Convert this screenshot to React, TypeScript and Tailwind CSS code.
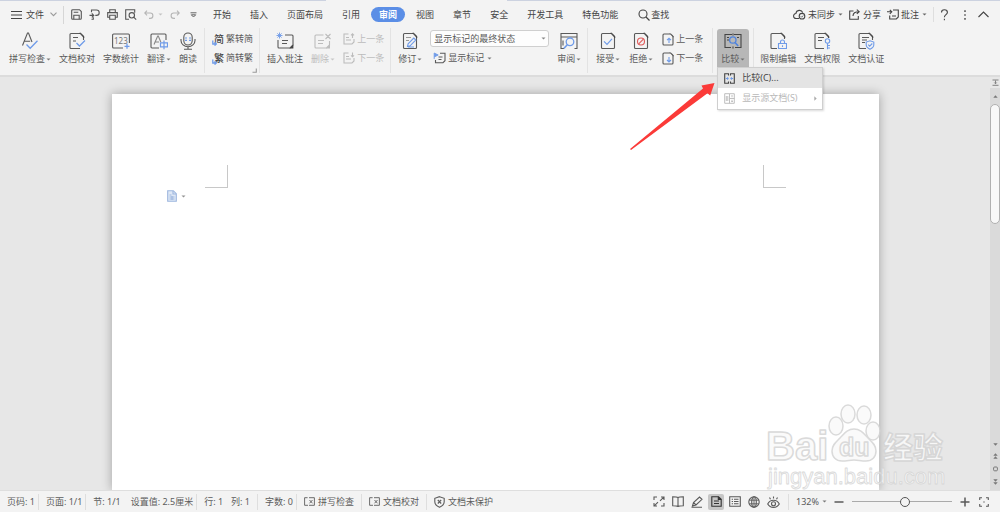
import React from "react";

const BLUE = "#6f9be8";

/** 图标外壳：1个单位对应1像素 */
function Icon({ w = 18, h = 18, children }: { w?: number; h?: number; children: React.ReactNode }) {
  return (
    <svg
      width={w}
      height={h}
      viewBox={`0 0 ${w} ${h}`}
      fill="none"
      stroke="currentColor"
      strokeWidth="1.1"
      className="shrink-0"
      aria-hidden="true"
    >
      {children}
    </svg>
  );
}

/** 下拉小三角 */
function Caret() {
  return (
    <svg width="5" height="3" viewBox="0 0 5 3" className="ml-px shrink-0" aria-hidden="true">
      <path d="M0.5 0.4h4L2.5 2.6z" fill="currentColor" opacity="0.8" />
    </svg>
  );
}

/** 右上角深色折角 */
function Fold() {
  return <path d="M11.5 1h1.2l3.3 3.3V6z" fill="#444" stroke="#444" strokeWidth="0.5" />;
}

/** 右上角折角的文档轮廓 */
function DocShape() {
  return (
    <>
      <path d="M12 1.5H3.5a1 1 0 0 0-1 1v13a1 1 0 0 0 1 1h11a1 1 0 0 0 1-1V5" />
      <Fold />
    </>
  );
}

/** 小号文档轮廓（上一条/下一条） */
function SmallDoc({ up }: { up?: boolean }) {
  return (
    <Icon w={12} h={13}>
      <path d="M8 1H2a1 1 0 0 0-1 1v9a1 1 0 0 0 1 1h8a1 1 0 0 0 1-1V3.5" />
      <path d="M7.8 0.7h1L11.3 3v1.2z" fill="#444" stroke="#444" strokeWidth="0.4" />
      <path d={up ? "M7 10V5.5M5 7.2l2-2 2 2" : "M7 5v5M5 8l2 2 2-2"} stroke={BLUE} />
    </Icon>
  );
}

/** 小号批注轮廓（禁用状态） */
function SmallComment({ up }: { up?: boolean }) {
  return (
    <Icon w={12} h={12}>
      <path d="M5.5 1H1v10h8l2-2V6M3 4.5h3M3 7h5" />
      <path d={up ? "M9.5 5V1M8 2.3L9.5 0.8 11 2.3" : "M9.5 0.5v4M8 3.3l1.5 1.5L11 3.3"} />
    </Icon>
  );
}

interface ToolProps {
  label: string;
  icon: React.ReactNode;
  caret?: boolean;
  disabled?: boolean;
}

/** 功能区大按钮 */
function BigTool({ label, icon, caret, disabled }: ToolProps) {
  return (
    <button
      type="button"
      disabled={disabled}
      className="flex h-9 flex-col items-center gap-px pt-px text-[#5a5a5a] disabled:text-[#bcbcbc]"
    >
      <span className="flex h-[22px] items-center">{icon}</span>
      <span className="flex items-center leading-3 whitespace-nowrap">
        {label}
        {caret && <Caret />}
      </span>
    </button>
  );
}

/** 功能区小按钮 */
function SmallTool({ label, icon, caret, disabled }: ToolProps) {
  return (
    <button
      type="button"
      disabled={disabled}
      className="flex h-[14px] items-center gap-[2px] leading-3 whitespace-nowrap text-[#5a5a5a] disabled:text-[#bcbcbc]"
    >
      {icon}
      {label}
      {caret && <Caret />}
    </button>
  );
}

function Stack({ children }: { children: React.ReactNode }) {
  return <div className="flex flex-col gap-[5px] pt-[3px]">{children}</div>;
}

function Group({ children, className = "gap-2 pr-1.5 pl-[7px]" }: { children: React.ReactNode; className?: string }) {
  return <div className={`relative flex h-[45px] border-r border-[#e3e3e3] pt-px ${className}`}>{children}</div>;
}

function ConvertIcon({ char }: { char: string }) {
  return (
    <Icon w={12} h={13}>
      <text x="2" y="10" fontSize="10" fontWeight="500" fill="#444" stroke="none">
        {char}
      </text>
      <path d="M0.8 7.5V11h3M2.6 9.3L4.3 11 2.6 12.6" stroke={BLUE} strokeWidth="1.3" />
    </Icon>
  );
}

const TABS = ["开始", "插入", "页面布局", "引用", "审阅", "视图", "章节", "安全", "开发工具", "特色功能"];

function TabBar() {
  return (
    <header className="flex h-[27px] items-center text-[#444]">
      <button type="button" className="ml-[11px] flex items-center gap-1">
        <Icon w={11} h={10}>
          <path d="M0 1.5h11M0 5h11M0 8.5h11" />
        </Icon>
        文件
        <span className="ml-[2px] text-[#999]">
          <Icon w={7} h={5}>
            <path d="M0.5 0.7l3 3 3-3" />
          </Icon>
        </span>
      </button>
      <div className="ml-[6px] h-[18px] w-px bg-[#d6d6d6]" />
      <div className="ml-[7px] flex items-center gap-[7px] text-[#555]">
        <button type="button" aria-label="保存">
          <Icon w={11} h={11}>
            <path d="M1.8 0.7h6.7l1.8 1.8v6.8a1 1 0 0 1-1 1H1.7a1 1 0 0 1-1-1V1.7a1 1 0 0 1 1-1zM2.7 3.3h4.6M2.8 10V6.2h5.4V10" />
          </Icon>
        </button>
        <button type="button" aria-label="输出">
          <Icon w={11} h={11}>
            <path d="M2.5 3.3V1h5a2.6 2.6 0 0 1 0 5.4H6.3M0.5 6.4H4M2.8 4.4l2 2-2 2M4.3 8.3v2H2.5" />
          </Icon>
        </button>
        <button type="button" aria-label="打印">
          <Icon w={11} h={11}>
            <path d="M2.7 3.5V0.7h5.6v2.8M2.5 8.3H0.7V3.6h9.6v4.7H8.5M2.7 6.3h5.6v4H2.7z" />
          </Icon>
        </button>
        <button type="button" aria-label="打印预览">
          <Icon w={12} h={11}>
            <path d="M4 10.3H0.7V0.7h9v3" />
            <circle cx="6.8" cy="6.3" r="2.7" />
            <path d="M8.7 8.2l2.5 2.4" />
          </Icon>
        </button>
        <button type="button" aria-label="撤销" className="flex items-center gap-[3px] text-[#b5b5b5]">
          <Icon w={10} h={9}>
            <path d="M3 0.7L0.8 3 3 5.3M1 3h5.2a2.7 2.7 0 0 1 0 5.4H5" />
          </Icon>
          <Caret />
        </button>
        <button type="button" aria-label="恢复" className="text-[#b5b5b5]">
          <Icon w={10} h={9}>
            <path d="M7 0.7L9.2 3 7 5.3M9 3H3.8a2.7 2.7 0 0 0 0 5.4H5" />
          </Icon>
        </button>
        <button type="button" aria-label="自定义" className="ml-[3px]">
          <Icon w={7} h={6}>
            <path d="M0.5 0.8h6M1.3 2.8h4.4L3.5 5z" strokeWidth="0.9" />
          </Icon>
        </button>
      </div>
      <nav className="ml-[8px] flex items-center gap-[3px]">
        {TABS.map((tab) => (
          <button
            key={tab}
            type="button"
            className={
              tab === "审阅"
                ? "h-[15px] rounded-full bg-[#5b8ee6] px-2 leading-[15px] font-bold whitespace-nowrap text-white"
                : "h-[15px] px-2 leading-[15px] whitespace-nowrap"
            }
          >
            {tab}
          </button>
        ))}
      </nav>
      <button type="button" className="ml-3 flex items-center gap-px">
        <Icon w={12} h={12}>
          <circle cx="5" cy="5" r="4" />
          <path d="M8 8l3.5 3.5" strokeWidth="1.3" />
        </Icon>
        查找
      </button>
      <div className="ml-auto flex items-center gap-[6px] pr-[11px] whitespace-nowrap">
        <button type="button" className="flex items-center gap-[2px]">
          <Icon w={13} h={11}>
            <path d="M6 9.5H3.3a2.5 2.5 0 0 1-.4-5A3.6 3.6 0 0 1 9.8 3.6" />
            <circle cx="9" cy="7.2" r="2.8" />
            <path d="M7.8 7.3l.9.9 1.5-1.7" strokeWidth="0.8" />
          </Icon>
          未同步
          <Caret />
        </button>
        <button type="button" className="flex items-center gap-[3px]">
          <Icon w={11} h={11}>
            <path d="M4.5 2H0.7v8.3h8.6V7M4 7c0-3 2-4.3 6-4.3M7.8 0.6L10.2 2.7 7.8 4.9" />
          </Icon>
          分享
        </button>
        <button type="button" className="flex items-center gap-[2px]">
          <Icon w={12} h={11}>
            <path d="M6 1h5.3v7l-2 2H2.7V6.5M5 7h4M0 2.7h4.5M2.8 0.8l2 2-2 2" />
          </Icon>
          批注
          <Caret />
        </button>
        <div className="h-[15px] w-px bg-[#dedede]" />
        <button type="button" aria-label="帮助">
          <Icon w={9} h={12}>
            <path d="M1.5 3.5C1.5 1.7 2.8 0.8 4.4 0.8s3 1 3 2.6c0 2.2-3 2.3-3 4.8M4.4 9.8v1.4" />
          </Icon>
        </button>
        <button type="button" aria-label="更多" className="pr-1.5 pl-[9px]">
          <Icon w={2} h={10}>
            <path d="M1 0.3v1.6M1 4.2v1.6M1 8.1v1.6" strokeWidth="1.4" />
          </Icon>
        </button>
        <button type="button" aria-label="折叠功能区">
          <Icon w={11} h={7}>
            <path d="M0.5 6l5-5 5 5" />
          </Icon>
        </button>
      </div>
    </header>
  );
}

/** 比较按钮及其下拉菜单 */
function CompareMenu() {
  return (
    <div className="relative self-start">
      <button
        type="button"
        aria-expanded="true"
        className="flex h-[38px] w-8 flex-col items-center gap-px rounded-t-[3px] bg-[#b7b7b7] pt-px text-[#5a5a5a]"
      >
        <span className="flex h-[22px] items-center">
          <Icon>
            <path d="M8 2.5H1v13h6M10 2.5h7v13h-6M9 1.5v2M9 14.5v2M3 5.5h2M3 8h2M13 5.5h2" stroke="#444" />
            <circle cx="8.8" cy="8" r="3.2" stroke="#4f83de" strokeWidth="1.3" />
            <path d="M11 10.5l3.2 3.5" stroke="#4f83de" strokeWidth="1.6" />
          </Icon>
        </span>
        <span className="flex items-center leading-3 whitespace-nowrap">
          比较
          <Caret />
        </span>
      </button>
      <div
        role="menu"
        className="absolute top-full left-0 z-20 w-[106px] border border-[#cfcfcf] bg-white pb-px shadow-[1px_1px_2px_rgba(0,0,0,0.15)]"
      >
        <button
          type="button"
          role="menuitem"
          className="flex h-5 w-full items-center gap-[7px] bg-[#e4e4e4] pl-1.5 text-[#444]"
        >
          <Icon w={11} h={11}>
            <path d="M4.5 2.5V0.7H0.7v9.6h3.8V8.5M6.5 2.5V0.7h3.8v9.6H6.5V8.5" />
            <path d="M1.8 5.5h2.8M6.4 5.5h2.8M3.6 4.2v2.6M7.4 4.2v2.6" stroke={BLUE} />
          </Icon>
          比较(C)...
        </button>
        <button
          type="button"
          role="menuitem"
          disabled
          className="flex h-5 w-full items-center gap-[7px] pl-1.5 text-[#b9b9b9]"
        >
          <Icon w={11} h={11}>
            <path d="M5.5 0.7H0.7v9.6h9.6V0.7H5.5v9.6M2.3 3v5M3.8 3v5M5.5 5.5h5M8 2v2.3M7.3 8.5h1.6M8 6.8v2" strokeWidth="0.9" />
          </Icon>
          显示源文档(S)
          <span className="mr-[5px] ml-auto">
            <svg width="3" height="5" viewBox="0 0 3 5" aria-hidden="true">
              <path d="M0.3 0.3v4.4l2.4-2.2z" fill="#aaa" />
            </svg>
          </span>
        </button>
      </div>
    </div>
  );
}

function Ribbon() {
  return (
    <div className="flex h-[49px] border-b-2 border-[#dcdcdc]">
      <Group className="gap-2 pr-[7px] pl-[9px]">
        <BigTool
          label="拼写检查"
          caret
          icon={
            <Icon>
              <path d="M1.5 13.5L6.5 1h1L11 10M3.4 9.3h5.8" />
              <path d="M5.5 12.5l3.7 3.7 7.3-7.5" stroke={BLUE} strokeWidth="1.3" />
            </Icon>
          }
        />
        <BigTool
          label="文档校对"
          icon={
            <Icon>
              <path d="M12 1.5H3a1 1 0 0 0-1 1v13a1 1 0 0 0 1 1h9M15.5 5v3M5 5.5h5M5 9h3" />
              <Fold />
              <path d="M8.5 11l3 3 5.5-5.5" stroke={BLUE} strokeWidth="1.3" />
            </Icon>
          }
        />
        <BigTool
          label="字数统计"
          icon={
            <Icon>
              <path d="M11 16H1.6a1 1 0 0 1-1-1V3a1 1 0 0 1 1-1h14.8a1 1 0 0 1 1 1v8" />
              <text x="2" y="12" fontSize="8" fill="#777" stroke="none">
                123
              </text>
              <path d="M15 11.8v5M12.5 14.3h5" stroke={BLUE} strokeWidth="1.3" />
            </Icon>
          }
        />
        <BigTool
          label="翻译"
          caret
          icon={
            <Icon>
              <path d="M9 16H2a1 1 0 0 1-1-1V3a1 1 0 0 1 1-1h13a1 1 0 0 1 1 1v5" />
              <path d="M4 12.5L7.7 4h.6l2.5 6M5 10h4" stroke="#888" />
              <path d="M10.5 10.8h7v4h-7zM14 8.5v8.7" stroke={BLUE} strokeWidth="1.2" />
            </Icon>
          }
        />
        <BigTool
          label="朗读"
          icon={
            <Icon>
              <rect x="4.8" y="1" width="8.4" height="12" rx="4.2" />
              <path d="M2 7v1.5a7 6.3 0 0 0 14 0V7M9 15v2M5 17.2h8" />
              <path d="M6 6h2M6 8.3h2M10 6h2M10 8.3h2" stroke={BLUE} strokeWidth="1.2" />
            </Icon>
          }
        />
      </Group>
      <Group>
        <Stack>
          <SmallTool label="繁转简" icon={<ConvertIcon char="简" />} />
          <SmallTool label="简转繁" icon={<ConvertIcon char="繁" />} />
        </Stack>
        <span className="absolute right-[2px] bottom-0 text-[#999]">
          <Icon w={5} h={5}>
            <path d="M4.3 0.5v3.8H0.5" />
          </Icon>
        </span>
      </Group>
      <Group>
        <BigTool
          label="插入批注"
          icon={
            <Icon>
              <path d="M9 3h7a1 1 0 0 1 1 1v9l-3 3H3a1 1 0 0 1-1-1V8M6 8.5h6M6 11.5h5" />
              <path d="M17.4 12.5v4h-4z" fill="#444" stroke="none" />
              <path d="M3.5 0.5v6M0.5 3.5h6M1.4 1.4l4.2 4.2M5.6 1.4L1.4 5.6" stroke={BLUE} strokeWidth="0.9" />
            </Icon>
          }
        />
        <BigTool
          label="删除"
          caret
          disabled
          icon={
            <Icon>
              <path d="M9.5 3H2a1 1 0 0 0-1 1v11a1 1 0 0 0 1 1h10.5l3-3V9M4 8.5h6M4 11.5h5M11.5 2l5 5M16.5 2l-5 5" />
              <path d="M16 12.5v4h-4z" fill="currentColor" stroke="none" />
            </Icon>
          }
        />
        <Stack>
          <SmallTool label="上一条" disabled icon={<SmallComment up />} />
          <SmallTool label="下一条" disabled icon={<SmallComment />} />
        </Stack>
      </Group>
      <Group>
        <BigTool
          label="修订"
          caret
          icon={
            <Icon>
              <DocShape />
              <path d="M5 5.5h5M5 8.5h3" stroke="#999" />
              <path d="M6.5 14.5l.6-2.7 5.7-5.8 2 2-5.7 5.8zM7 15h6" stroke={BLUE} />
            </Icon>
          }
        />
        <div className="flex flex-col gap-1 pt-px">
          <div className="relative flex w-[119px] items-center">
            <select
              aria-label="标记显示状态"
              className="h-[17px] w-full appearance-none rounded-[3px] border border-[#cfcfcf] bg-[#fdfdfd] pl-[3px] text-[9px] text-[#5a5a5a]"
            >
              <option>显示标记的最终状态</option>
            </select>
            <span className="pointer-events-none absolute right-[3px] text-[#666]">
              <Caret />
            </span>
          </div>
          <div className="pl-[3px]">
            <SmallTool
              label="显示标记"
              caret
              icon={
                <Icon w={13} h={12}>
                  <path d="M7 1.2h5v7.5l-2 2H2.5V8M5.5 5h4M5.5 7.5h3" />
                  <path d="M1.2 7V1l4 2-4 2" stroke={BLUE} fill={BLUE} strokeWidth="0.9" />
                </Icon>
              }
            />
          </div>
        </div>
        <BigTool
          label="审阅"
          caret
          icon={
            <Icon>
              <path d="M4 16.5H1V1.5h16v15h-2.5M1 5h16M3 8.5v5" />
              <circle cx="10" cy="9.8" r="3.8" stroke={BLUE} strokeWidth="1.3" />
              <path d="M7.3 12.7L3.8 16.5" stroke={BLUE} strokeWidth="1.6" />
            </Icon>
          }
        />
      </Group>
      <Group className="gap-[9px] pr-[9px] pl-2">
        <BigTool
          label="接受"
          caret
          icon={
            <Icon>
              <DocShape />
              <path d="M5 9.3l3 3 5-5.5" stroke={BLUE} strokeWidth="1.2" />
            </Icon>
          }
        />
        <BigTool
          label="拒绝"
          caret
          icon={
            <Icon>
              <DocShape />
              <circle cx="9" cy="9.5" r="3.5" stroke="#e05a5a" />
              <path d="M6.7 11.9l4.7-4.8" stroke="#e05a5a" />
            </Icon>
          }
        />
        <Stack>
          <SmallTool label="上一条" icon={<SmallDoc up />} />
          <SmallTool label="下一条" icon={<SmallDoc />} />
        </Stack>
      </Group>
      <Group className="px-1">
        <CompareMenu />
      </Group>
      <div className="flex h-[45px] gap-2 pt-px pl-1.5">
        <BigTool
          label="限制编辑"
          icon={
            <Icon>
              <path d="M12 1.5H3a1 1 0 0 0-1 1v13a1 1 0 0 0 1 1h5M15.5 5v2" />
              <Fold />
              <path d="M9.5 11.5h8v5h-8zM11.5 11.5V10a2 2 0 0 1 4 0v1.5M13.5 13.2v1.7" stroke={BLUE} />
            </Icon>
          }
        />
        <BigTool
          label="文档权限"
          icon={
            <Icon>
              <path d="M12 1.5H3a1 1 0 0 0-1 1v13a1 1 0 0 0 1 1h8M15.5 5v1M5 5.5h6M5 8.5h4" />
              <Fold />
              <circle cx="14.5" cy="9" r="2.2" stroke={BLUE} />
              <path d="M14.5 11.2v6M14.5 13.5H17M14.5 16H17" stroke={BLUE} />
            </Icon>
          }
        />
        <BigTool
          label="文档认证"
          icon={
            <Icon>
              <path d="M12 1.5H3a1 1 0 0 0-1 1v13a1 1 0 0 0 1 1h6M15.5 5v3M5 5.5h7M5 8h5M5 10.5h3" />
              <Fold />
              <path d="M13 8.8l3.8 1.3v2.7c0 2-1.5 3.4-3.8 4.4-2.3-1-3.8-2.4-3.8-4.4v-2.7z" stroke={BLUE} />
              <path d="M11.2 12.7l1.5 1.5 2.6-2.7" stroke={BLUE} />
            </Icon>
          }
        />
      </div>
    </div>
  );
}

function ScrollBar() {
  return (
    <div className="flex w-[10px] shrink-0 flex-col items-center bg-[#dadada] text-[#777]">
      <div className="flex h-[11px] w-full items-center justify-center bg-[#e7e7e7]">
        <Icon w={7} h={7}>
          <path d="M0.5 1h6M3.5 1.5v3M0.5 6.3h6M2.3 3.5l1.2 1.3 1.2-1.3" strokeWidth="0.9" />
        </Icon>
      </div>
      <div className="flex h-4 items-center">
        <Icon w={5} h={3}>
          <path d="M0.3 2.7h4.4L2.5 0.3z" fill="currentColor" stroke="none" />
        </Icon>
      </div>
      <div className="h-[120px] w-[10px] rounded-full border border-[#b0b0b0] bg-[#f8f8f8]" />
      <div className="mt-auto flex flex-col items-center gap-[7px] pb-[5px]">
        <Icon w={5} h={3}>
          <path d="M0.3 0.3h4.4L2.5 2.7z" fill="currentColor" stroke="none" />
        </Icon>
        <Icon w={5} h={6}>
          <path d="M0.3 2.7h4.4L2.5 0.3zM0.3 5.7h4.4L2.5 3.3z" fill="currentColor" stroke="none" />
        </Icon>
        <Icon w={5} h={6}>
          <rect x="0.6" y="1" width="3.8" height="3.8" rx="1" strokeWidth="1" />
        </Icon>
        <Icon w={5} h={6}>
          <path d="M0.3 0.3h4.4L2.5 2.7zM0.3 3.3h4.4L2.5 5.7z" fill="currentColor" stroke="none" />
        </Icon>
      </div>
    </div>
  );
}

/** 右下角水印 */
function Watermark() {
  return (
    <svg
      width="190"
      height="92"
      viewBox="0 0 190 92"
      className="pointer-events-none absolute right-[51px] bottom-0 z-10"
      fill="#fafafa"
      stroke="#d4d4d4"
      strokeWidth="1.5"
      strokeLinejoin="round"
      opacity="0.85"
    >
      <ellipse cx="77" cy="28" rx="7" ry="9" />
      <ellipse cx="89" cy="16" rx="7" ry="9" />
      <ellipse cx="105" cy="17" rx="7" ry="9" />
      <ellipse cx="114" cy="33" rx="7" ry="9" />
      <path d="M95 31c7 0 10 5 14 9s8 7 8 13c0 6-4 10-10 10-5 0-8-1-12-1s-7 1-12 1c-6 0-10-4-10-10 0-6 4-9 8-13s7-9 14-9z" />
      <text x="7" y="62" fontSize="40" fontWeight="bold" fontFamily="Liberation Sans, sans-serif">
        Bai
      </text>
      <text x="80" y="58" fontSize="25" fontWeight="bold" fontFamily="Liberation Sans, sans-serif">
        du
      </text>
      <text x="124" y="60" fontSize="30" fontWeight="bold" fontFamily="Noto Sans CJK SC, sans-serif">
        经验
      </text>
      <text x="9" y="86" fontSize="22" strokeWidth="0.8" fontFamily="Liberation Sans, sans-serif">
        jingyan.baidu.com
      </text>
    </svg>
  );
}

function Workspace() {
  return (
    <main className="relative flex min-h-0 flex-1 bg-[#e7e7e7]">
      <div className="flex min-w-0 flex-1 overflow-hidden pt-[17px]">
        <div className="mx-auto w-full max-w-[767px] bg-white shadow-[0_0_10px_rgba(0,0,0,0.3)]">
          <div className="flex justify-between px-[93px] pt-[71px]">
            <div className="h-[23px] w-[23px] border-r border-b border-[#c8c8c8]" />
            <div className="h-[23px] w-[23px] border-b border-l border-[#c8c8c8]" />
          </div>
          <button type="button" aria-label="粘贴选项" className="mt-[2px] ml-[55px] flex items-center gap-[3px] text-[#777]">
            <Icon w={10} h={12}>
              <path d="M0.7 0.7h5.6l3 3v7.6H0.7z" fill="#dfe8f6" stroke="#9db6de" />
              <path d="M6 1v3h3M2.5 5h2M2.5 7h5M2.5 9h5M5 6v4" stroke="#9db6de" />
            </Icon>
            <Caret />
          </button>
        </div>
      </div>
      <ScrollBar />
      <Watermark />
    </main>
  );
}

function StatusCell({ children, last }: { children: React.ReactNode; last?: boolean }) {
  return (
    <div
      className={
        last
          ? "flex h-4 items-center gap-[3px] pl-[7px]"
          : "flex h-4 items-center gap-[3px] border-r border-[#dedede] pr-[3px] pl-[7px]"
      }
    >
      {children}
    </div>
  );
}

function CheckBoxIcon() {
  return (
    <Icon w={11} h={9}>
      <path d="M4 8.3H0.6V0.7h3M5 0.7h5.4v7.6H5M5.5 3l3 3.3M8.5 3l-3 3.3" strokeWidth="0.9" />
    </Icon>
  );
}

function StatusBar() {
  return (
    <footer className="flex h-[22px] shrink-0 items-center border-t border-[#dedede] whitespace-nowrap text-[#5c5c5c]">
      <StatusCell>页码: 1</StatusCell>
      <StatusCell>页面: 1/1</StatusCell>
      <StatusCell>
        <span className="mr-[7px]">节: 1/1</span>
        <span>设置值: 2.5厘米</span>
      </StatusCell>
      <StatusCell>
        <span>行: 1</span>
        <span className="mr-1 ml-[5px]">列: 1</span>
      </StatusCell>
      <StatusCell>字数: 0</StatusCell>
      <StatusCell>
        <CheckBoxIcon />
        <span className="mr-1">拼写检查</span>
      </StatusCell>
      <StatusCell>
        <CheckBoxIcon />
        <span className="mr-1">文档校对</span>
      </StatusCell>
      <StatusCell last>
        <Icon w={11} h={12}>
          <path d="M5.5 0.7l4.7 1.6v3.5c0 2.5-2 4.3-4.7 5.5C2.8 10.1 0.8 8.3 0.8 5.8V2.3z" />
          <path d="M3.8 4l3.4 3.5M7.2 4L3.8 7.5" />
        </Icon>
        文档未保护
      </StatusCell>
      <div className="ml-auto flex items-center gap-[3px] text-[#5a5a5a]">
        <button type="button" aria-label="全屏" className="flex size-4 items-center justify-center">
          <Icon w={12} h={11}>
            <path d="M1 4V1h3M8 1h3v3M11 7v3H8M4 10H1V7M7 4.8l3.5-3.5M5 6.2L1.5 9.7" />
          </Icon>
        </button>
        <button type="button" aria-label="阅读版式" className="flex size-4 items-center justify-center">
          <Icon w={12} h={11}>
            <path d="M6 1.5C5 0.8 3 0.8 0.7 0.8v9c2.3 0 4.3 0 5.3.7 1-.7 3-.7 5.3-.7v-9C9 0.8 7 0.8 6 1.5zM6 1.5v9" />
          </Icon>
        </button>
        <button type="button" aria-label="写作模式" className="flex size-4 items-center justify-center">
          <Icon w={12} h={12}>
            <path d="M1.5 10l1-3.5L8.5 1l2.5 2.3L5 9zM2.5 6.5L5 9M0.5 11.2h10.5" />
          </Icon>
        </button>
        <button
          type="button"
          aria-label="页面视图"
          aria-pressed="true"
          className="flex size-4 items-center justify-center rounded-[2px] bg-[#c6c6c6] text-[#333]"
        >
          <Icon w={11} h={11}>
            <path d="M7.5 0.7H0.8v9.6h9.4V3.3zM3 5h5M3 7.5h5" />
            <path d="M7.3 0.7v2.8h2.9" fill="#333" />
          </Icon>
        </button>
        <button type="button" aria-label="大纲" className="flex size-4 items-center justify-center">
          <Icon w={12} h={11}>
            <path d="M0.7 0.7h10.6v9.6H0.7zM2.7 3.3H4M5 3.3h4.5M2.7 5.5H4M5 5.5h4.5M2.7 7.7H4M5 7.7h4.5" />
          </Icon>
        </button>
        <button type="button" aria-label="Web版式" className="flex size-4 items-center justify-center">
          <Icon w={12} h={12}>
            <circle cx="6" cy="6" r="5.2" />
            <ellipse cx="6" cy="6" rx="2.3" ry="5.2" />
            <path d="M1.2 4.2h9.6M1.2 7.8h9.6M6 1v10" strokeWidth="0.9" />
          </Icon>
        </button>
        <button type="button" aria-label="护眼模式" className="flex size-4 items-center justify-center">
          <Icon w={13} h={12}>
            <path d="M0.7 8C2 5.5 4 4.3 6.5 4.3S11 5.5 12.3 8c-1.3 2.3-3.3 3.4-5.8 3.4S2 10.3 0.7 8zM6.5 0.5v2M2.5 1.5l1 1.8M10.5 1.5l-1 1.8" />
            <circle cx="6.5" cy="7.8" r="2" />
          </Icon>
        </button>
        <div className="ml-1 h-4 w-px bg-[#dedede]" />
        <button type="button" className="ml-1 flex items-center gap-[2px]">
          132%
          <Caret />
        </button>
        <button type="button" aria-label="缩小" className="ml-1">
          <Icon w={10} h={10}>
            <path d="M0.5 5h9" strokeWidth="1.5" />
          </Icon>
        </button>
        <input
          type="range"
          aria-label="显示比例"
          min={0}
          max={100}
          defaultValue={53}
          className="mx-[5px] h-[10px] w-[100px] appearance-none bg-[linear-gradient(#aaa,#aaa)] bg-[length:100%_1px] bg-center bg-no-repeat [&::-webkit-slider-thumb]:size-[10px] [&::-webkit-slider-thumb]:appearance-none [&::-webkit-slider-thumb]:rounded-full [&::-webkit-slider-thumb]:border [&::-webkit-slider-thumb]:border-[#555] [&::-webkit-slider-thumb]:bg-[#f3f3f3]"
        />
        <button type="button" aria-label="放大">
          <Icon w={10} h={10}>
            <path d="M0.5 5h9M5 0.5v9" strokeWidth="1.5" />
          </Icon>
        </button>
        <button type="button" aria-label="适合窗口" className="mr-[11px] ml-[6px]">
          <Icon w={10} h={10}>
            <path d="M0.7 3V0.7H3M7 0.7h2.3V3M9.3 7v2.3H7M3 9.3H0.7V7M4.3 5h1.4" />
          </Icon>
        </button>
      </div>
    </footer>
  );
}

export default function App() {
  return (
    <div className="relative flex h-screen flex-col overflow-hidden bg-[#f3f3f3] font-[family-name:'Noto_Sans','Noto_Sans_CJK_SC',sans-serif] text-[9px] leading-3">
      {/* 顶部标签栏底边 */}
      <div className="flex h-px shrink-0 justify-between">
        <div className="w-[326px] bg-[#ccd2e0]" />
        <div className="ml-[181px] flex-1 bg-[#ccd2e0]" />
      </div>
      <TabBar />
      <Ribbon />
      <Workspace />
      <StatusBar />
      {/* 指向“比较”菜单项的红色箭头 */}
      <svg
        width="86"
        height="70"
        viewBox="0 0 86 70"
        className="pointer-events-none absolute top-[81px] left-[629px] z-30"
        aria-hidden="true"
      >
        <path d="M1 68L74 7.5l-1.5-3L85.500 2l-4.300 12.500-2.700-2.300L2 69z" fill="#fb3a38" />
      </svg>
    </div>
  );
}
